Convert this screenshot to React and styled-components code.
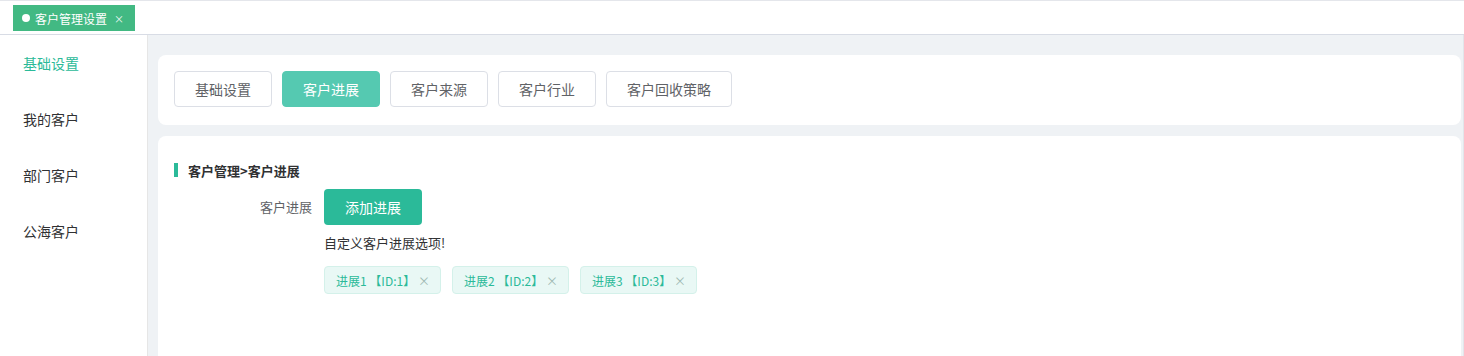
import React from 'react';
import styled, { createGlobalStyle } from 'styled-components';

const GlobalStyle = createGlobalStyle`
  html, body {
    margin: 0;
    padding: 0;
    background: #fff;
    font-family: "Noto Sans CJK SC", "Noto Sans", "Liberation Sans", sans-serif;
  }
  * { box-sizing: border-box; }
`;

const sideItems = ['基础设置', '我的客户', '部门客户', '公海客户'];
const tabs = ['基础设置', '客户进展', '客户来源', '客户行业', '客户回收策略'];
const progress = [
  { name: '进展1', id: 1 },
  { name: '进展2', id: 2 },
  { name: '进展3', id: 3 },
];

const App = () => {
  return (
    <Page>
      <GlobalStyle />
      <TagsBar>
        <ViewTag>
          <Dot />
          客户管理设置
          <TagClose>×</TagClose>
        </ViewTag>
      </TagsBar>
      <Body>
        <Sidebar>
          {sideItems.map((item, i) => (
            <SideItem key={item} $active={i === 0}>
              {item}
            </SideItem>
          ))}
        </Sidebar>
        <Main>
          <TabCard>
            {tabs.map((t, i) => (
              <TabButton key={t} $active={i === 1} $wide={t.length > 4}>
                {t}
              </TabButton>
            ))}
          </TabCard>
          <ContentCard>
            <Title>客户管理&gt;客户进展</Title>
            <FormRow>
              <Label>客户进展</Label>
              <FieldBody>
                <PrimaryButton>添加进展</PrimaryButton>
                <Hint>自定义客户进展选项!</Hint>
                <ChipList>
                  {progress.map((p) => (
                    <Chip key={p.id}>
                      {p.name} 【ID:{p.id}】
                      <ChipClose>×</ChipClose>
                    </Chip>
                  ))}
                </ChipList>
              </FieldBody>
            </FormRow>
          </ContentCard>
        </Main>
      </Body>
    </Page>
  );
};

export default App;

const Page = styled.div`
  width: 100%;
  height: 356px;
  display: flex;
  flex-direction: column;
  overflow: hidden;
`;

const TagsBar = styled.div`
  height: 35px;
  flex-shrink: 0;
  border-top: 1px solid #e4e6eb;
  border-bottom: 1px solid #d8dce5;
  padding: 4px 13px 0;
  display: flex;
  align-items: flex-start;
`;

const ViewTag = styled.div`
  height: 26px;
  width: 122px;
  background: #42b983;
  color: #fff;
  font-size: 12px;
  display: flex;
  align-items: center;
  padding-left: 9px;
`;

const Dot = styled.span`
  width: 8px;
  height: 8px;
  border-radius: 50%;
  background: #fff;
  margin-right: 5px;
`;

const TagClose = styled.span`
  font-size: 10px;
  margin-left: 7px;
  opacity: 0.9;
`;

const Body = styled.div`
  flex: 1;
  display: flex;
  min-height: 0;
`;

const Sidebar = styled.div`
  width: 148px;
  flex-shrink: 0;
  border-right: 1px solid #e6e6e6;
`;

const SideItem = styled.div`
  height: 56px;
  line-height: 56px;
  padding-left: 23px;
  font-size: 14px;
  color: ${(p) => (p.$active ? '#2bba99' : '#303133')};
`;

const Main = styled.div`
  flex: 1;
  background: #eff2f5;
  padding: 20px 2px 0 10px;
  border-right: 1px solid #e2e5ea;
  display: flex;
  flex-direction: column;
  gap: 11px;
`;

const Card = styled.div`
  background: #fff;
  border-radius: 8px;
`;

const TabCard = styled(Card)`
  height: 70px;
  padding: 16px;
  display: flex;
  gap: 10px;
`;

const TabButton = styled.div`
  width: ${(p) => (p.$wide ? '126px' : '98px')};
  height: 36px;
  border-radius: 4px;
  border: 1px solid ${(p) => (p.$active ? '#55c9b1' : '#dcdfe6')};
  background: ${(p) => (p.$active ? '#55c9b1' : '#fff')};
  color: ${(p) => (p.$active ? '#fff' : '#606266')};
  font-size: 14px;
  display: flex;
  align-items: center;
  justify-content: center;
`;

const ContentCard = styled(Card)`
  flex: 1;
  padding: 25px 16px 0;
  border-radius: 8px 8px 0 0;
`;

const Title = styled.div`
  display: flex;
  align-items: center;
  font-size: 13px;
  font-weight: bold;
  color: #303133;
  height: 18px;
  &::before {
    content: '';
    width: 4px;
    height: 14px;
    background: #2bba99;
    margin-right: 10px;
  }
`;

const FormRow = styled.div`
  display: flex;
  margin-top: 10px;
`;

const Label = styled.div`
  width: 150px;
  padding-right: 12px;
  text-align: right;
  font-size: 13px;
  color: #606266;
  line-height: 36px;
`;

const FieldBody = styled.div`
  display: flex;
  flex-direction: column;
  align-items: flex-start;
`;

const PrimaryButton = styled.div`
  width: 98px;
  height: 36px;
  border-radius: 4px;
  background: #2bba99;
  color: #fff;
  font-size: 14px;
  display: flex;
  align-items: center;
  justify-content: center;
`;

const Hint = styled.div`
  margin-top: 8px;
  font-size: 13px;
  line-height: 20px;
  color: #303133;
`;

const ChipList = styled.div`
  display: flex;
  gap: 11px;
  margin-top: 13px;
`;

const Chip = styled.div`
  width: 117px;
  height: 28px;
  padding: 0 10px 0 11px;
  border: 1px solid #d4f1ea;
  border-radius: 4px;
  background: #e9f8f5;
  color: #2bba99;
  font-size: 12px;
  display: flex;
  align-items: center;
  white-space: nowrap;
`;

const ChipClose = styled.span`
  margin-left: auto;
  color: #9fb9b3;
  font-size: 12px;
`;
